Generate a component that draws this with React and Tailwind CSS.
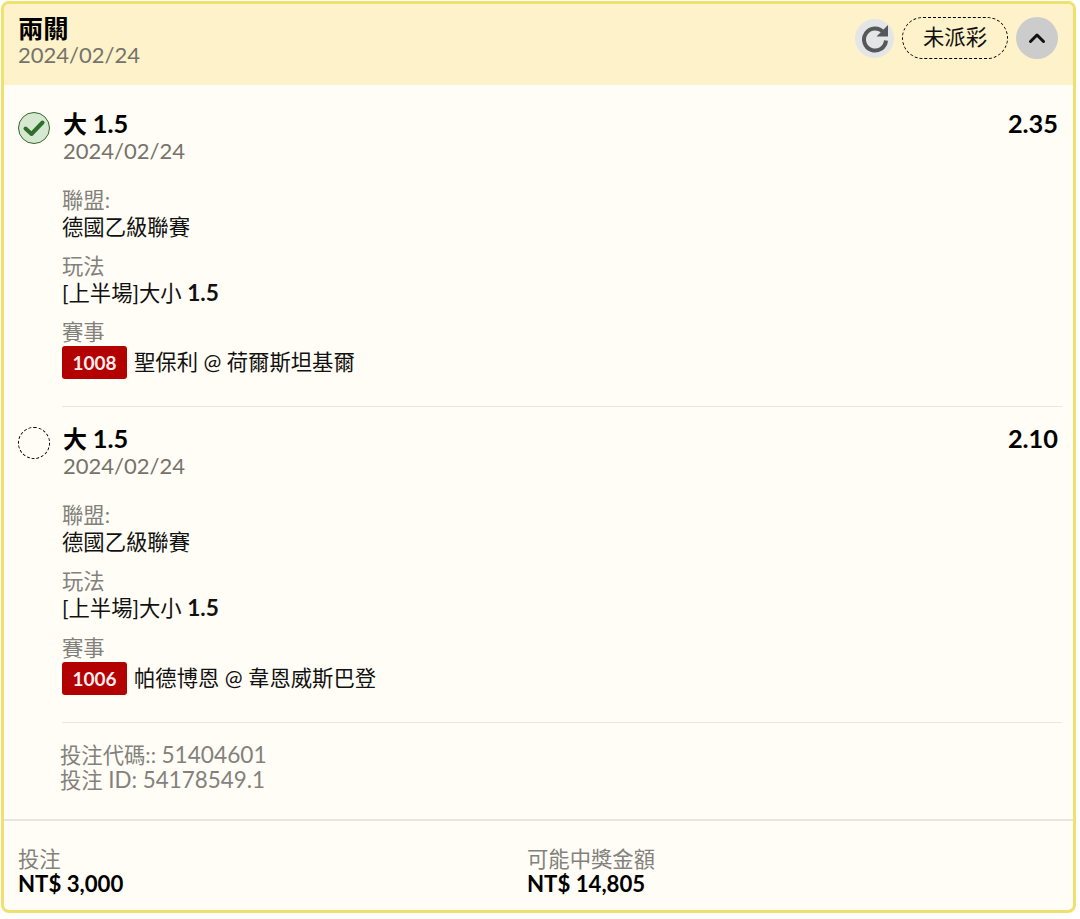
const font = "font-['Lato','Noto_Sans_CJK_TC',sans-serif]";

function Leg({ icon, odds, code, match, rowGap, ruleGap }) {
  return (
    <div className="flex flex-col">
      <div className="flex justify-between pl-[14px] pr-[15px]">
        <div className="flex gap-[13px]">
          <div className="pt-[2px]">{icon}</div>
          <div className="flex flex-col">
            <div className="text-[24px] leading-[27px] font-bold text-black">大 <span className="text-[25.33px] leading-none">1.5</span></div>
            <div className="text-[22px] leading-[27px] text-[#76726c]">2024/02/24</div>
          </div>
        </div>
        <div className="text-[25.33px] leading-[27px] font-bold text-black">{odds}</div>
      </div>
      <div className={`ml-[58px] mt-[23px] flex flex-col text-[21.33px] leading-[27px] ${rowGap}`}>
        <div>
          <div className="text-[#83817d]">聯盟:</div>
          <div className="text-[#111]">德國乙級聯賽</div>
        </div>
        <div>
          <div className="text-[#83817d]">玩法</div>
          <div className="text-[#111]">[上半場]大小 <span className="text-[22.67px] font-bold leading-none">1.5</span></div>
        </div>
        <div>
          <div className="text-[#83817d]">賽事</div>
          <div className="flex items-center gap-[7px] text-[#111]">
            <span className="flex h-[33px] w-[65px] items-center justify-center rounded-[3px] bg-[#b30000] text-[19px] font-bold text-[#fdeeee]">{code}</span>
            <span>{match}</span>
          </div>
        </div>
      </div>
      <div className={`ml-[58px] mr-[11px] h-[1px] bg-[#e8e6e0] ${ruleGap}`} />
    </div>
  );
}

export default function App() {
  return (
    <div className="bg-white pb-[6px] pl-[1px] pt-[1px]">
      <div className={`${font} flex h-[912px] w-[1075px] flex-col overflow-hidden rounded-[8px] border-[3px] border-[#f0e070] bg-[#fffdf5]`}>
        <div className="flex h-[81px] shrink-0 items-start justify-between bg-[#fdf2c9] pl-[14px] pr-[15px] pt-[11px]">
          <div className="flex flex-col">
            <div className="text-[25.33px] leading-[27px] font-bold text-black">兩關</div>
            <div className="text-[22px] leading-[26px] text-[#76726c]">2024/02/24</div>
          </div>
          <div className="flex items-center gap-[8px] pt-[2px]">
            <div className="flex h-[39px] w-[39px] items-center justify-center rounded-full bg-[#e4e5e7]">
              <svg width="30" height="30" viewBox="0 0 30 30" fill="none">
                <path d="M23.5 9.5A11 11 0 1 0 26 17.5" stroke="#55575b" strokeWidth="4" />
                <path d="M16.5 13.5H28V2Z" fill="#55575b" />
              </svg>
            </div>
            <div className="flex h-[42px] w-[106px] items-center justify-center rounded-full border border-dashed border-black text-[21.33px] text-[#111]">未派彩</div>
            <div className="flex h-[42px] w-[42px] items-center justify-center rounded-full bg-[#cccccc]">
              <svg width="18" height="12" viewBox="0 0 18 12" fill="none">
                <path d="M2.5 9.5 9 3l6.5 6.5" stroke="#111" strokeWidth="3" strokeLinecap="round" strokeLinejoin="round" />
              </svg>
            </div>
          </div>
        </div>

        <div className="flex flex-1 flex-col pt-[25px]">
          <Leg
            odds="2.35"
            code="1008"
            match="聖保利 @ 荷爾斯坦基爾"
            rowGap="gap-[12px]"
            ruleGap="mt-[26.5px]"
            icon={
              <div className="flex h-[32px] w-[32px] items-center justify-center rounded-full border border-[#2f6b2a] bg-[#d6e8d2]">
                <svg width="24" height="20" viewBox="0 0 24 20" fill="none">
                  <path d="M3.5 10.5 9.5 16 20.5 4.5" stroke="#2f6f2b" strokeWidth="4" strokeLinecap="round" strokeLinejoin="round" />
                </svg>
              </div>
            }
          />
          <div className="h-[18px]" />
          <Leg
            odds="2.10"
            code="1006"
            match="帕德博恩 @ 韋恩威斯巴登"
            rowGap="gap-[12.5px]"
            ruleGap="mt-[27.5px]"
            icon={<div className="h-[32px] w-[32px] rounded-full border border-dashed border-black" />}
          />
          <div className="ml-[56px] mt-[20px] flex flex-col text-[21.33px] leading-[25px] text-[#83817d]">
            <div>投注代碼:: <span className="text-[22.67px] leading-none">51404601</span></div>
            <div>投注 <span className="text-[22.4px] leading-none">ID: 54178549.1</span></div>
          </div>
          <div className="mt-[26px] h-[2px] bg-[#e8e6e0]" />
          <div className="flex pl-[14px] pt-[26px]">
            <div className="w-[509px]">
              <div className="text-[21.33px] leading-[25px] text-[#83817d]">投注</div>
              <div className="text-[22.2px] leading-[24px] font-bold text-black">NT$ 3,000</div>
            </div>
            <div>
              <div className="text-[21.33px] leading-[25px] text-[#83817d]">可能中獎金額</div>
              <div className="text-[22.2px] leading-[24px] font-bold text-black">NT$ 14,805</div>
            </div>
          </div>
        </div>
      </div>
    </div>
  );
}
